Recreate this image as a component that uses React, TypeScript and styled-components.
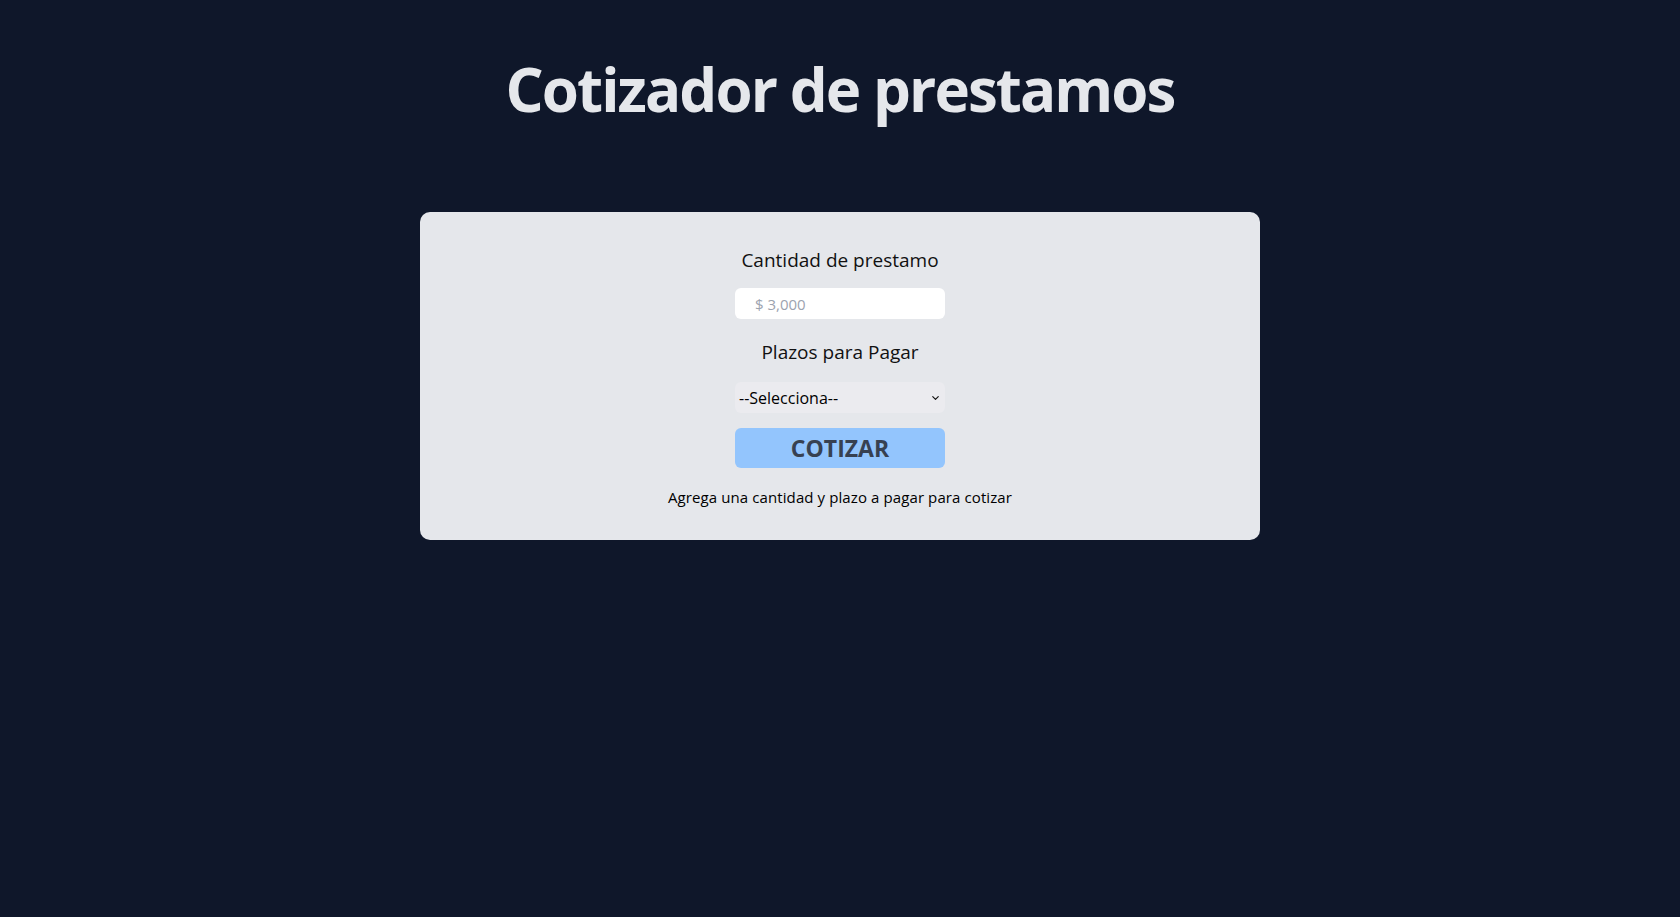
import React, { useState } from 'react';
import styled, { createGlobalStyle } from 'styled-components';
import { ChevronDown } from 'lucide-react';

const GlobalStyle = createGlobalStyle`
  html, body {
    margin: 0;
    padding: 0;
    background: #0f172a;
    font-family: 'Open Sans', 'Noto Sans', sans-serif;
  }
`;

const Page = styled.div`
  display: flex;
  flex-direction: column;
  align-items: center;
  min-height: 100vh;
`;

const Title = styled.h1`
  margin: 59px 0 93px;
  font-size: 60px;
  line-height: 60px;
  font-weight: 700;
  color: #e5e7eb;
  letter-spacing: -1.9px;
`;

const Card = styled.div`
  width: 840px;
  box-sizing: border-box;
  background: #e5e7eb;
  border-radius: 10px;
  padding: 34px 0 31px;
  display: flex;
  flex-direction: column;
  align-items: center;
`;

const Label = styled.label<{ $space: number }>`
  font-size: 19px;
  line-height: 28px;
  color: #111;
  margin-bottom: ${p => p.$space}px;
`;

const AmountInput = styled.input`
  width: 210px;
  height: 31px;
  box-sizing: border-box;
  border: none;
  border-radius: 6px;
  background: #fff;
  padding: 0 20px;
  font-family: inherit;
  font-size: 15px;
  color: #111;
  outline: none;
  margin-bottom: 19px;
  &::placeholder {
    color: #9ca3af;
  }
`;

const SelectWrap = styled.div`
  position: relative;
  width: 210px;
  margin-bottom: 15px;
`;

const TermSelect = styled.select`
  display: block;
  width: 100%;
  height: 31px;
  box-sizing: border-box;
  appearance: none;
  border: none;
  border-radius: 6px;
  background: #ebebef;
  font-family: inherit;
  font-size: 16px;
  color: #000;
  padding: 0 20px 0 4px;
  outline: none;
`;

const SelectArrow = styled.span`
  position: absolute;
  right: 4px;
  top: 50%;
  transform: translateY(-50%);
  display: flex;
  color: #111;
  pointer-events: none;
`;

const QuoteButton = styled.button`
  width: 210px;
  height: 40px;
  border: none;
  border-radius: 6px;
  background: #93c5fd;
  color: #374151;
  font-family: inherit;
  font-size: 23px;
  font-weight: 700;
  cursor: pointer;
  margin-bottom: 17px;
`;

const Hint = styled.p`
  margin: 0;
  font-size: 15px;
  line-height: 24px;
  letter-spacing: 0.1px;
  color: #000;
`;

const App = () => {
  const [amount, setAmount] = useState('');
  const [term, setTerm] = useState('');

  return (
    <Page>
      <GlobalStyle />
      <Title>Cotizador de prestamos</Title>
      <Card>
        <Label htmlFor="amount" $space={14}>Cantidad de prestamo</Label>
        <AmountInput
          id="amount"
          type="number"
          placeholder="$ 3,000"
          value={amount}
          onChange={e => setAmount(e.target.value)}
        />
        <Label htmlFor="term" $space={16}>Plazos para Pagar</Label>
        <SelectWrap>
          <TermSelect id="term" value={term} onChange={e => setTerm(e.target.value)}>
            <option value="">--Selecciona--</option>
            <option value="3">3 meses</option>
            <option value="6">6 meses</option>
            <option value="12">12 meses</option>
            <option value="24">24 meses</option>
          </TermSelect>
          <SelectArrow>
            <ChevronDown size={11} strokeWidth={2.5} />
          </SelectArrow>
        </SelectWrap>
        <QuoteButton type="button">COTIZAR</QuoteButton>
        <Hint>Agrega una cantidad y plazo a pagar para cotizar</Hint>
      </Card>
    </Page>
  );
};

export default App;
